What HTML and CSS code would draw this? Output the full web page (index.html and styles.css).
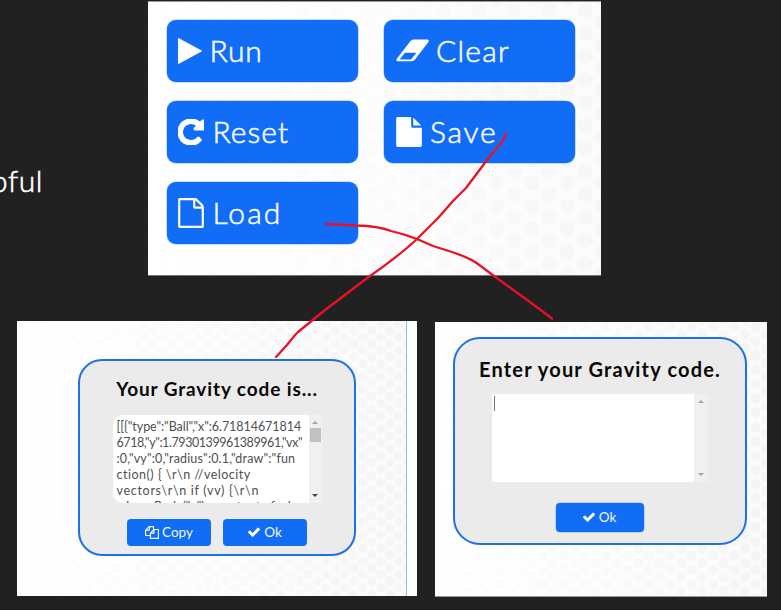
FILE: index.html
```html
<!DOCTYPE html>
<html lang="en">
<head>
<meta charset="utf-8">
<title>Gravity controls</title>
<link rel="stylesheet" href="styles.css">
</head>
<body>
<svg class="defs" aria-hidden="true">
  <symbol id="check" viewBox="121 270 1550 1252"><path d="M1671 566q0 40-28 68l-724 724-136 136q-28 28-68 28t-68-28l-136-136-362-362q-28-28-28-68t28-68l136-136q28-28 68-28t68 28l294 295 656-657q28-28 68-28t68 28l136 136q28 28 28 68z"/></symbol>
</svg>
<main class="slide">
  <section class="top">
    <p class="caption">pful</p>
    <div class="panel controls">
      <button class="btn"><svg class="i-play" viewBox="192 118 1408 1556" preserveAspectRatio="none"><path d="M1576 927l-1328 738q-23 13-39.500 3t-16.500-36V160q0-26 16.500-36t39.500 3l1328 738q23 13 23 31t-23 31z"/></svg><span class="t-run">Run</span></button>
      <button class="btn"><svg class="i-eraser" viewBox="0 0 33 23"><path fill-rule="evenodd" d="M17.500.5H31Q34 .5 32 3.500L19 20.500Q17.500 22.300 15.500 22.300H2Q-.7 22 1 19.500L14.500 2Q15.700.5 17.500.5ZM9 13.700 3.600 20.500H15L20.400 13.700Z"/></svg><span class="t-clear">Clear</span></button>
      <button class="btn"><svg class="i-reset" viewBox="128 128 1536 1536"><path d="M1664 256v448q0 26-19 45t-45 19h-448q-42 0-59-40-17-39 14-69l138-138q-148-137-349-137-104 0-198.500 40.500t-163.500 109.500-109.500 163.500-40.500 198.500 40.500 198.500 109.500 163.500 163.500 109.500 198.500 40.500q119 0 225-52t179-147q7-10 23-12 15 0 25 9l137 138q9 8 9.500 20.500t-7.500 22.500q-109 132-264 204.500t-327 72.500q-156 0-298-61t-245-164-164-245-61-298 61-298 164-245 245-164 298-61q147 0 284.500 55.500t244.500 156.500l130-129q29-31 70-14 39 17 39 59z"/></svg><span class="t-reset">Reset</span></button>
      <button class="btn"><svg class="i-file" viewBox="128 0 1536 1792"><path d="M1152 512v-472q22 14 36 28l408 408q14 14 28 36h-472zm-128 32q0 40 28 68t68 28h544v1056q0 40-28 68t-68 28h-1344q-40 0-68-28t-28-68v-1600q0-40 28-68t68-28h800v544z"/></svg><span class="t-save">Save</span></button>
      <button class="btn"><svg class="i-file" viewBox="128 0 1536 1792"><path d="M1596 380q28 28 48 76t20 88v1152q0 40-28 68t-68 28h-1344q-40 0-68-28t-28-68v-1600q0-40 28-68t68-28h896q40 0 88 20t76 48zm-444-244v376h376q-10-29-22-41l-313-313q-12-12-41-22zm384 1528v-1024h-416q-40 0-68-28t-28-68v-416h-768v1536h1280z"/></svg><span class="t-load">Load</span></button>
    </div>
  </section>
  <section class="bottom">
    <div class="panel save-panel">
      <div class="dialog save-dialog">
        <h2 class="save-title">Your Gravity code is...</h2>
        <div class="field code-field">
          <div class="code">
            <div class="l1">[[{"type":"Ball","x":6.71814671814</div>
            <div class="l2">6718,"y":1.7930139961389961,"vx"</div>
            <div class="l3">:0,"vy":0,"radius":0.1,"draw":"fun</div>
            <div class="l4">ction() { \r\n //velocity</div>
            <div class="l5">vectors\r\n if (vv) {\r\n</div>
            <div class="l6">where Body("x") = vector to fxyl</div>
          </div>
          <div class="bar"><i class="up"></i><i class="thumb"></i><i class="down dark"></i></div>
        </div>
        <div class="actions">
          <button class="small"><svg class="i-copy" viewBox="0 0 14 13"><path d="M8.500 3.500V.6H4.200L.6 4.200V9.500H5.200M4.200.6V4.200H.6M9 3.500H13.400V12.400H5.400V7.100ZM9 3.500V7.100H5.400"/></svg><span class="t-copy">Copy</span></button>
          <button class="small"><svg class="i-check"><use href="#check"/></svg><span class="t-ok">Ok</span></button>
        </div>
      </div>
      <div class="gutter"></div>
    </div>
    <div class="panel load-panel">
      <div class="dialog load-dialog">
        <h2 class="load-title">Enter your Gravity code.</h2>
        <div class="field load-field">
          <div class="entry"><i class="caret"></i></div>
          <div class="bar"><i class="up"></i><i class="down"></i></div>
        </div>
        <button class="small wide"><svg class="i-check"><use href="#check"/></svg><span class="t-ok">Ok</span></button>
      </div>
    </div>
  </section>
  <svg class="ink" viewBox="0 0 781 610">
    <path d="M506 134Q502 143 498 147L490 156 466 188 453 201 438 218 417 239Q400 255 370 276L325 310 298 332Q294 336 287 345L276 357"/>
    <path d="M326 224 357 225.500Q378 226 391 231 404 234 417 239L433 246 452 252Q470 258 478 264L494 276 530 302 552 318.500"/>
  </svg>
</main>
</body>
</html>
```
FILE: styles.css
```css
* { box-sizing: border-box; }
body { margin: 0; background: #212121; font-family: Lato, "Open Sans", sans-serif; }
.defs { position: absolute; width: 0; height: 0; }
.slide { position: relative; width: 781px; height: 610px; overflow: hidden; border-bottom: 1px solid #181818; padding-top: 1px; }
.top { display: flex; height: 275px; }
.caption { width: 148px; margin: 161px 0 0; text-indent: -9px; color: #fff; font-size: 30px; line-height: 36px; font-weight: 300; letter-spacing: .6px; -webkit-text-stroke: .6px #fff; }
.bottom { display: flex; align-items: flex-start; gap: 18px; padding: 45px 0 0 17px; }

.panel { position: relative; isolation: isolate; background: linear-gradient(90deg, #fff, #fbfbfb); }
.panel::before {
  content: ""; position: absolute; inset: 0; z-index: -1;
  background-image: radial-gradient(circle, #f4f4f4 var(--r), transparent calc(var(--r) + .8px)), radial-gradient(circle, #f4f4f4 var(--r), transparent calc(var(--r) + .8px));
  background-size: var(--w) var(--h);
  background-position: var(--x) var(--y), calc(var(--x) + var(--w) / 2) calc(var(--y) + var(--h) / 2);
  -webkit-mask-image: linear-gradient(90deg, rgba(0,0,0,.1), rgba(0,0,0,.3) 50%, #000);
  mask-image: linear-gradient(90deg, rgba(0,0,0,.1), rgba(0,0,0,.3) 50%, #000);
}
.controls {
  --r: 7px; --w: 35.4px; --h: 23px; --x: 30px; --y: -3px;
  width: 453px; height: 275px; padding: 18.300px 0 0 18.500px; border-top: 1px solid #999; border-bottom: 1px solid #777;
  display: grid; grid-template: repeat(3, 62px) / 191px 191px; gap: 19px 26.500px;
}
.controls::before { opacity: .7; }
button { border: 0; margin: 0; color: #f4f8ff; background: #116df6; font-family: inherit; font-weight: 300; display: flex; align-items: center; }
svg { fill: #fff; flex: none; }
.btn { font-size: 30px; border-radius: 9px; padding: 0 0 1px 11px; box-shadow: 0 0 0 .5px #8dbcff; }
.btn span { -webkit-text-stroke: .6px #f4f8ff; position: relative; top: -.5px; }
.t-run { letter-spacing: .8px; }
.t-clear { letter-spacing: 1.200px; }
.t-reset { letter-spacing: 1px; margin-left: 1px; }
.t-save { letter-spacing: 1.700px; margin-left: -1px; }
.t-load { letter-spacing: 2.100px; }
.i-play { width: 24px; height: 26px; margin-right: 8px; }
.i-eraser { width: 33px; height: 23px; margin: 0 7px 0 1px; }
.i-reset { width: 26px; height: 26px; margin-right: 8px; stroke: #fff; stroke-width: 80px; }
.i-file { width: 26px; height: 30px; margin-right: 9px; }
.btn:nth-child(4) { padding-left: 12px; }

.save-panel { --r: 4.100px; --w: 18.200px; --h: 13.200px; --x: 0px; --y: 3px; display: flex; width: 399.500px; height: 275px; padding: 37.500px 0 0 61px; }
.load-panel { --r: 4.700px; --w: 21.300px; --h: 14.300px; --x: 1px; --y: 5px; width: 332px; height: 275px; margin-top: 1px; padding: 15px 0 0 18px; border-bottom: 1px solid #999; }
.gutter { margin: -37.500px 0 0 auto; width: 11px; border-left: 1.500px solid #8db9f8; background: #fff; }
.dialog { border: 2px solid #1d70e6; background: #ebebeb; display: flex; flex-direction: column; align-items: center; }
.save-dialog { width: 278px; height: 197.500px; border-radius: 24px; }
.load-dialog { width: 294px; height: 208px; border-radius: 27px; }
h2 { margin: 0; color: #080808; font-weight: 700; white-space: nowrap; }
.save-title { font-size: 19px; line-height: 24px; margin-top: 16px; letter-spacing: .88px; }
.load-title { font-size: 20px; line-height: 24px; margin-top: 18px; letter-spacing: 1.160px; padding-left: 1px; }
.field { display: flex; background: #fff; overflow: hidden; }
.code-field { width: 209px; height: 88.500px; margin-top: 14px; border-radius: 10px 0 0 10px; }
.code { flex: 1; padding: 4px 0 0 4px; font-size: 12.500px; line-height: 16px; color: #505050; white-space: nowrap; overflow: hidden; }
.l1 { letter-spacing: -.05px; }
.l2 { letter-spacing: -.42px; }
.l3 { letter-spacing: .17px; }
.l4 { letter-spacing: .5px; }
.l5 { letter-spacing: .7px; }
.load-field { width: 216px; height: 88px; margin-top: 13px; }
.entry { flex: 1; padding: 1.500px 2px; }
.caret { display: block; width: 1px; height: 15px; background: #777; }
.bar { width: 13px; background: #f0f0f0; display: flex; flex-direction: column; align-items: center; padding: 6px 0; }
.load-field .bar { width: 14px; }
.up, .down { border: 3px solid transparent; width: 0; height: 0; }
.up { border-top: 0; border-bottom-color: #a5a5a5; }
.down { border-bottom: 0; border-top-color: #a5a5a5; margin-top: auto; }
.dark { border-top-color: #444; }
.thumb { width: 11px; height: 14px; margin-top: 4px; background: #c1c1c1; }
.actions { display: flex; gap: 12px; margin-top: 15.500px; }
.small { width: 84px; height: 27.500px; border-radius: 4px; justify-content: center; padding: 0; font-size: 13.500px; font-weight: 400; }
.wide { width: 88px; height: 29px; margin-top: 20.500px; box-shadow: 0 0 0 .5px #8dbcff; }
.i-check { width: 12px; height: 10px; margin-right: 4px; }
.i-copy { width: 14px; height: 13px; margin-right: 3px; fill: none; stroke: #fff; stroke-width: 1.100; stroke-linejoin: round; }
.ink { position: absolute; inset: 0; width: 781px; height: 610px; fill: none; stroke: #e81224; stroke-width: 2.300; stroke-linecap: round; stroke-linejoin: round; pointer-events: none; }
```
